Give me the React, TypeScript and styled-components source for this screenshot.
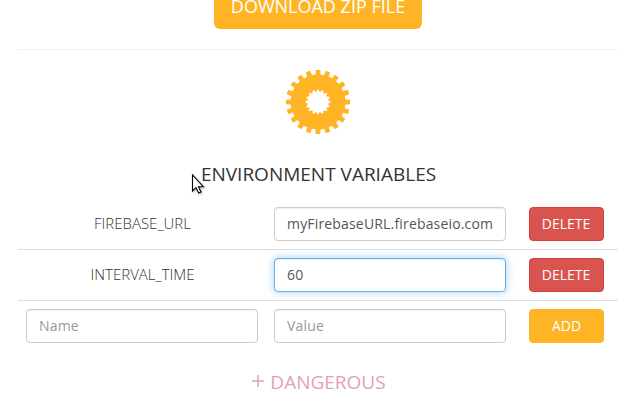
import React from "react";
import styled, { createGlobalStyle } from "styled-components";

const GlobalStyle = createGlobalStyle`
  * { box-sizing: border-box; }
  body {
    margin: 0;
    background: #fff;
    color: #333;
    font-family: "Open Sans", sans-serif;
    font-size: 14px;
    line-height: 20px;
    overflow: hidden;
  }
`;

const Page = styled.main`
  position: relative;
  width: 600px;
  height: 403px;
  margin-left: 18px;
  display: flex;
  flex-direction: column;
  align-items: center;
`;

const DownloadButton = styled.button`
  flex: none;
  width: 208px;
  height: 46px;
  margin-top: -17px;
  padding: 0;
  border: 0;
  border-radius: 6px;
  background: #ffb426;
  color: #fff;
  font: 18px/24px "Open Sans", sans-serif;
  white-space: nowrap;
`;

const Divider = styled.hr`
  width: 100%;
  margin: 20px 0;
  border: 0;
  border-top: 1px solid #eee;
`;

const GearIcon = styled.svg`
  flex: none;
  width: 64px;
  height: 64px;
  fill: #ffb426;
`;

const Heading = styled.h2`
  margin: 28px 0 12px;
  padding-left: 1px;
  font-size: 19px;
  line-height: 24px;
  font-weight: 400;
  white-space: nowrap;
`;

const Table = styled.div`
  width: 100%;
`;

const Row = styled.div<{ $first?: boolean }>`
  display: grid;
  grid-template-columns: 248px 248px 104px;
  align-items: center;
  height: 51px;
  border-top: 1px solid ${(p) => (p.$first ? "transparent" : "#ddd")};
`;

const Cell = styled.div`
  display: flex;
  justify-content: center;
  padding: 8px;
`;

const VariableName = styled.span`
  padding: 0 0 2px 1px;
  font-size: 15px;
  font-weight: 300;
  color: #333;
`;

const Field = styled.input<{ $active?: boolean }>`
  width: 100%;
  height: 34px;
  padding: 5px 12px 7px;
  border: 1px solid ${(p) => (p.$active ? "#66afe9" : "#ccc")};
  border-radius: 4px;
  outline: 0;
  background: #fff;
  color: #555;
  font: 14px/20px "Open Sans", sans-serif;
  letter-spacing: 0.17px;
  box-shadow: inset 0 1px 1px rgba(0, 0, 0, 0.075)
    ${(p) => (p.$active ? ", 0 0 8px rgba(102, 175, 233, 0.6)" : "")};
  &::placeholder { color: #999; opacity: 1; }
`;

const ActionButton = styled.button<{ $kind: "delete" | "add" }>`
  width: 75px;
  height: 34px;
  padding: 0 0 0 ${(p) => (p.$kind === "add" ? "1px" : "0")};
  border: 1px solid ${(p) => (p.$kind === "delete" ? "#d43f3a" : "#ffb426")};
  border-radius: 4px;
  background: ${(p) => (p.$kind === "delete" ? "#d9534f" : "#ffb426")};
  color: #fff;
  font: 14px/20px "Open Sans", sans-serif;
`;

const DangerLink = styled.a`
  margin-top: 19px;
  padding-left: 2px;
  display: flex;
  align-items: center;
  gap: 6px;
  color: #e59fb5;
  font-size: 19px;
  line-height: 24px;
  white-space: nowrap;
`;

const PlusIcon = styled.svg`
  width: 12px;
  height: 12px;
  margin-top: -3px;
`;

const Pointer = styled.svg`
  position: absolute;
  left: 173px;
  top: 173px;
  width: 14px;
  height: 22px;
  filter: drop-shadow(1px 1px 1px rgba(0, 0, 0, 0.3));
`;

/* Builds a closed ring of teeth; widths are fractions of one tooth pitch. */
function toothRing(count: number, root: number, tip: number, rootWidth: number, tipWidth: number) {
  const pitch = (2 * Math.PI) / count;
  const points: string[] = [];
  for (let i = 0; i < count; i++) {
    const mid = i * pitch - Math.PI / 2;
    const corners: [number, number][] = [
      [root, -rootWidth / 2],
      [tip, -tipWidth / 2],
      [tip, tipWidth / 2],
      [root, rootWidth / 2],
    ];
    for (const [r, f] of corners) {
      const a = mid + f * pitch;
      points.push(`${(32 + r * Math.cos(a)).toFixed(2)} ${(32 + r * Math.sin(a)).toFixed(2)}`);
    }
  }
  return `M${points.join("L")}Z`;
}

const gearPath = toothRing(20, 27.5, 32.2, 0.58, 0.46) + toothRing(16, 10.6, 12.4, 0.6, 0.36);

const variables = [
  { name: "FIREBASE_URL", value: "myFirebaseURL.firebaseio.com", active: false },
  { name: "INTERVAL_TIME", value: "60", active: true },
];

export default function App() {
  return (
    <>
      <GlobalStyle />
      <Page>
        <DownloadButton>DOWNLOAD ZIP FILE</DownloadButton>
        <Divider />
        <GearIcon viewBox="0 0 64 64">
          <path fillRule="evenodd" d={gearPath} />
        </GearIcon>
        <Heading>ENVIRONMENT VARIABLES</Heading>
        <Table>
          {variables.map((v, i) => (
            <Row key={v.name} $first={i === 0}>
              <Cell><VariableName>{v.name}</VariableName></Cell>
              <Cell><Field defaultValue={v.value} $active={v.active} /></Cell>
              <Cell><ActionButton $kind="delete">DELETE</ActionButton></Cell>
            </Row>
          ))}
          <Row>
            <Cell><Field placeholder="Name" /></Cell>
            <Cell><Field placeholder="Value" /></Cell>
            <Cell><ActionButton $kind="add">ADD</ActionButton></Cell>
          </Row>
        </Table>
        <DangerLink>
          <PlusIcon viewBox="0 0 12 12">
            <path d="M6 0V12M0 6H12" stroke="currentColor" strokeWidth="1.5" />
          </PlusIcon>
          DANGEROUS
        </DangerLink>
        <Pointer viewBox="0 0 14 22">
          <path
            d="M1.5 2V18L5 14.6L7.7 20L10 19L7.5 13.7H12.3Z"
            fill="#fff"
            stroke="#000"
            strokeWidth="1.1"
          />
        </Pointer>
      </Page>
    </>
  );
}
